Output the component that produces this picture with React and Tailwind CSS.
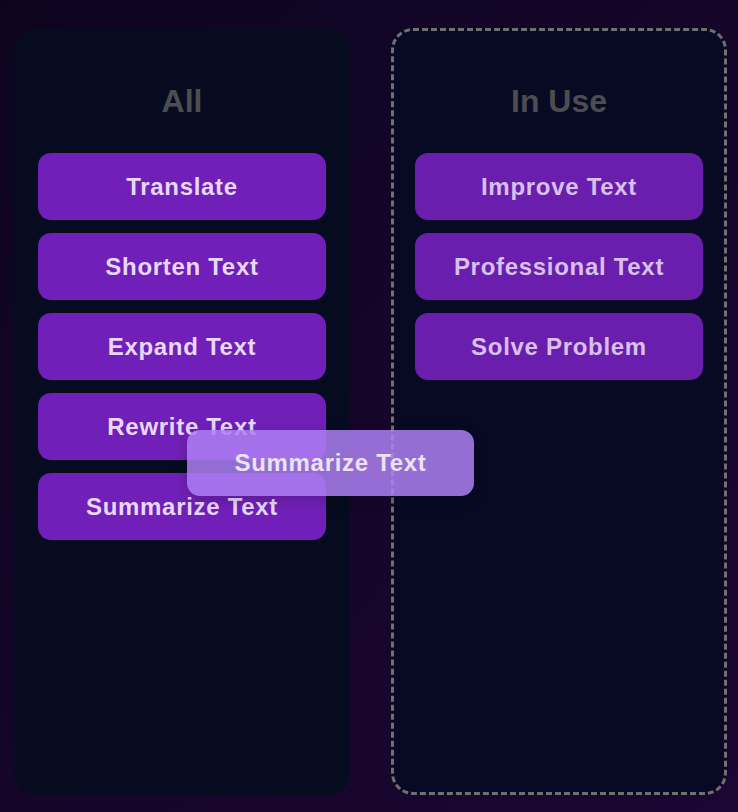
import React from 'react';

const ALL = ['Translate', 'Shorten Text', 'Expand Text', 'Rewrite Text', 'Summarize Text'];
const IN_USE = ['Improve Text', 'Professional Text', 'Solve Problem'];

function Item({ label, muted }) {
  return (
    <div
      className={`h-[67px] rounded-[13px] flex items-center justify-center text-[24px] font-bold tracking-[0.7px] ${
        muted ? 'bg-[#6a1ead] text-[#d8c0ea]' : 'bg-[#7020b8] text-[#e8d8f8]'
      }`}
    >
      {label}
    </div>
  );
}

function Column({ title, items, dashed }) {
  return (
    <div
      className={`w-[336px] h-[767px] rounded-[22px] flex flex-col ${
        dashed
          ? 'bg-[#080a24] border-[3px] border-dashed border-[#707070] px-[21px] pt-[21px]'
          : 'bg-[#060b1f] px-6 pt-6'
      }`}
    >
      <div className="h-[98px] mb-[3px] flex items-center justify-center text-[32px] font-bold text-[#4d4d4f]">
        {title}
      </div>
      <div className="flex flex-col gap-[13px]">
        {items.map(label => (
          <Item key={label} label={label} muted={dashed} />
        ))}
      </div>
    </div>
  );
}

export default function App() {
  return (
    <div
      className="relative w-[738px] h-[812px] overflow-hidden bg-gradient-to-br from-[#0e0420] via-[#150529] to-[#1c0634]"
      style={{ fontFamily: '"Liberation Sans", Arial, sans-serif' }}
    >
      <div className="flex gap-[41px] pl-[14px] pt-[28px]">
        <Column title="All" items={ALL} />
        <Column title="In Use" items={IN_USE} dashed />
      </div>

      {/* drag preview */}
      <div className="absolute left-[187px] top-[430px] w-[287px] h-[66px] rounded-[13px] bg-[#ad80f2]/85 shadow-[0_4px_16px_rgba(0,0,0,0.2)] flex items-center justify-center text-[24px] font-bold tracking-[0.7px] text-[#ece2f6]">
        Summarize Text
      </div>
    </div>
  );
}
